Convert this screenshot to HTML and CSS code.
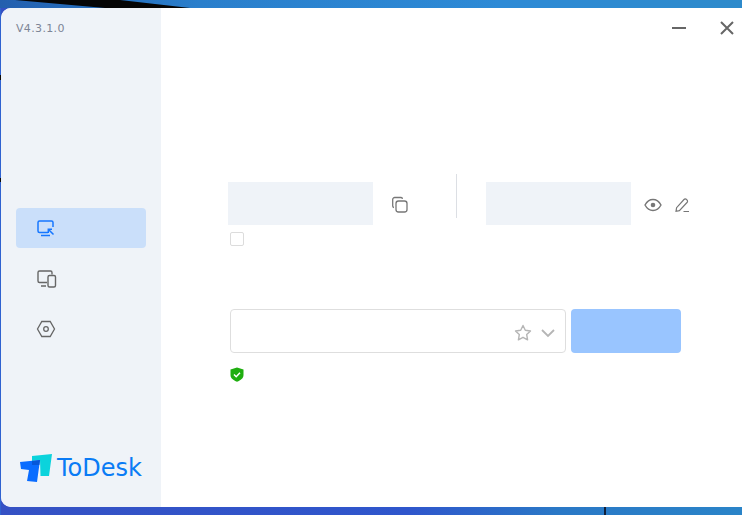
FILE: index.html
```html
<!doctype html>
<html lang="en">
  <head>
    <meta charset="UTF-8" />
    <meta name="viewport" content="width=device-width, initial-scale=1.0" />
    <title>ToDesk</title>
    <link rel="stylesheet" href="styles.css">
  </head>
  <body>
    <!-- bits of the wallpaper that show around the window -->
    <div class="wall-wedge"></div>
    <div class="wall-tick"></div>

    <div class="window">
      <aside class="sidebar">
        <div class="version">V4.3.1.0</div>

        <nav class="nav">
          <div class="nav-item active">
            <svg width="20" height="20" viewBox="0 0 20 20" fill="none" stroke="#1677ff" stroke-width="1.5">
              <path d="M12 13.500H3.500a1.500 1.500 0 0 1-1.500-1.500V3.500A1.500 1.500 0 0 1 3.500 2h12A1.500 1.500 0 0 1 17 3.500V8" />
              <path d="M5 16.500h9" />
              <path d="M17.500 15.500L12.500 10.500M12.300 14V10.300H16" />
            </svg>
          </div>
          <div class="nav-item">
            <svg width="22" height="20" viewBox="0 0 22 20" fill="none" stroke="#666" stroke-width="1.4">
              <path d="M11 13.500H3.500a1.500 1.500 0 0 1-1.500-1.500V3.500A1.500 1.500 0 0 1 3.500 2h11A1.500 1.500 0 0 1 16 3.500v2" />
              <path d="M5 17h5" />
              <rect x="12" y="6.500" width="7.500" height="11.500" rx="1.500" />
            </svg>
          </div>
          <div class="nav-item">
            <svg width="20" height="20" viewBox="0 0 20 20" fill="none" stroke="#666" stroke-width="1.3">
              <path d="M5.800 2.500h8.400L18.500 10l-4.300 7.500H5.800L1.500 10z" />
              <circle cx="10" cy="10" r="2.300" />
            </svg>
          </div>
        </nav>

        <div class="brand">
          <svg width="32" height="28" viewBox="0 0 32 28">
            <path d="M12 2L32 0 29 22H20.500L20 6 12 7z" fill="#0bd3dc" />
            <path d="M0 8L20 6 17 28 7 27 9 16 1 15z" fill="#0a6cff" />
            <path d="M12 7L20 6 19.400 11H12z" fill="#0757d8" />
          </svg>
          <span class="brand-name">ToDesk</span>
        </div>
      </aside>

      <main class="main">
        <div class="title-bar">
          <svg width="16" height="16" viewBox="0 0 16 16" stroke="#666" stroke-width="2">
            <path d="M1 8h14" />
          </svg>
          <svg width="16" height="16" viewBox="0 0 16 16" fill="none" stroke="#666" stroke-width="2">
            <path d="M2 2l12 12M14 2L2 14" />
          </svg>
        </div>

        <section class="codes">
          <div class="code-col">
            <div class="code-row">
              <div class="code-box"></div>
              <svg class="copy-icon" width="18" height="18" viewBox="0 0 18 18" fill="none" stroke="#777" stroke-width="1.300">
                <path d="M3 11.500A1.500 1.500 0 0 1 1.700 10V3.500a2 2 0 0 1 2-2H10a1.500 1.500 0 0 1 1.500 1.300" />
                <rect x="5" y="5" width="11" height="11" rx="2.500" />
              </svg>
            </div>
            <div class="checkbox"></div>
          </div>

          <div class="divider"></div>

          <div class="code-row">
            <div class="code-box"></div>
            <svg class="eye-icon" width="18" height="14" viewBox="0 0 18 14" fill="none" stroke="#777" stroke-width="1.400">
              <path d="M1 7c2-3.700 4.800-5.500 8-5.500S15 3.300 17 7c-2 3.700-4.800 5.500-8 5.500S3 10.700 1 7z" />
              <circle cx="9" cy="7" r="2.300" fill="#777" stroke="none" />
            </svg>
            <svg class="pen-icon" width="16" height="16" viewBox="0 0 16 16" fill="none" stroke="#777" stroke-width="1.200">
              <path d="M2 14.300l.6-3.600L10 2.500a1.700 1.700 0 0 1 2.500 0l.5.500a1.700 1.700 0 0 1 0 2.500L5.400 13.700z" />
              <path d="M9.500 14.500h5.500" />
            </svg>
          </div>
        </section>

        <section class="connect">
          <div class="connect-row">
            <div class="code-input">
              <svg width="18" height="18" viewBox="0 0 18 18" fill="none" stroke="#b5b5b5" stroke-width="1.400" stroke-linejoin="round">
                <path d="M9 1.500l2.300 4.800 5.200.7-3.800 3.600.9 5.200L9 13.300l-4.600 2.500.9-5.200L1.500 7l5.200-.7z" />
              </svg>
              <svg width="16" height="10" viewBox="0 0 16 10" fill="none" stroke="#b5b5b5" stroke-width="1.800">
                <path d="M2 2l6 6 6-6" />
              </svg>
            </div>
            <div class="connect-btn"></div>
          </div>
          <svg class="shield" width="14" height="15" viewBox="0 0 14 15">
            <path d="M7 .5L13.500 2.500V8c0 3.200-2.800 5.300-6.500 6.800C3.300 13.300.5 11.200.5 8V2.500z" fill="#1fae10" />
            <path d="M4 7.500l2.200 2.200L10 5.800" fill="none" stroke="#fff" stroke-width="1.500" />
          </svg>
        </section>
      </main>
    </div>
  </body>
</html>
```

FILE: styles.css
```css
* {
  margin: 0;
  padding: 0;
  box-sizing: border-box;
}

html,
body {
  height: 100%;
  overflow: hidden;
}

body {
  position: relative;
  font-family: 'DejaVu Sans', sans-serif;
  background:
    linear-gradient(90deg, #235fae 0, #2a7fcc 200px, #2d8ad6 500px, #2d8acb 100%) top / 100% 8px no-repeat,
    linear-gradient(180deg, #2f62d0 0, #2f62d0 75px, #0a0a0a 75px, #0a0a0a 80px, #2f62d0 80px, #2f62d0 178px, #0a0a0a 178px, #0a0a0a 182px, #2f62d0 182px) left / 1px 100% no-repeat,
    linear-gradient(90deg, #3551c4 0%, #2f56cc 55%, #2a78c6 75%, #2a84c8 100%);
}

.wall-wedge {
  position: absolute;
  top: 0;
  left: 0;
  width: 190px;
  height: 8px;
  background: #050505;
  clip-path: polygon(15px 0, 120px 0, 190px 8px, 105px 8px);
}

.wall-tick {
  position: absolute;
  top: 507px;
  left: 604px;
  width: 2px;
  height: 8px;
  background: #10203a;
}

.window {
  position: absolute;
  top: 8px;
  left: 1px;
  right: 0;
  height: 499px;
  display: flex;
  background: #fff;
  border-radius: 10px 0 0 10px;
  overflow: hidden;
}

.sidebar {
  width: 160px;
  display: flex;
  flex-direction: column;
  background: #eff3f8;
}

.version {
  padding: 14px 0 0 15px;
  font-size: 11px;
  line-height: 13px;
  letter-spacing: 0.35px;
  color: #7d8596;
}

.nav {
  margin-top: 173px;
  padding: 0 15px;
  display: flex;
  flex-direction: column;
  gap: 10px;
}

.nav-item {
  height: 40px;
  padding: 1px 0 0 20px;
  display: flex;
  align-items: center;
  border-radius: 4px;
}

.nav-item:last-child {
  padding-top: 2px;
}

.nav-item.active {
  background: #cadffa;
}

.brand {
  margin-top: auto;
  padding: 0 0 24px 19px;
  display: flex;
  align-items: center;
  gap: 5px;
}

.brand-name {
  font-size: 24px;
  line-height: 30px;
  color: #0a7bf5;
}

.main {
  flex: 1;
  display: flex;
  flex-direction: column;
}

.title-bar {
  height: 40px;
  padding: 12px 7px 0 0;
  display: flex;
  justify-content: flex-end;
  gap: 32px;
}

.codes {
  margin-top: 134px;
  padding-left: 67px;
  display: flex;
  align-items: flex-start;
}

.code-col {
  width: 228px;
}

.code-row {
  display: flex;
  align-items: center;
}

.code-box {
  width: 145px;
  height: 43px;
  background: #eff3f8;
}

.copy-icon {
  margin: 3px 0 0 18px;
}

.eye-icon {
  margin: 3px 0 0 13px;
}

.pen-icon {
  margin: 3px 0 0 12px;
}

.checkbox {
  width: 14px;
  height: 14px;
  margin: 7px 0 0 2px;
  border: 1px solid #dcdcdc;
  border-radius: 2px;
}

.divider {
  width: 1px;
  height: 44px;
  margin: -8px 29px 0 0;
  background: #dcdfe4;
}

.connect {
  margin-top: 63px;
  padding-left: 69px;
}

.connect-row {
  display: flex;
  gap: 5px;
}

.code-input {
  width: 336px;
  height: 44px;
  padding: 3px 9px 0 0;
  display: flex;
  align-items: center;
  justify-content: flex-end;
  gap: 8px;
  border: 1px solid #dedede;
  border-radius: 4px;
}

.connect-btn {
  width: 110px;
  height: 44px;
  background: #99c5ff;
  border-radius: 4px;
}

.shield {
  display: block;
  margin-top: 14px;
}
```
